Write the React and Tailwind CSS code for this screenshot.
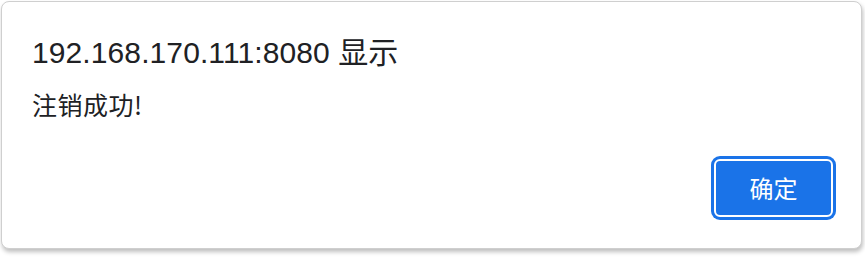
export default function App() {
  return (
    <div className="w-[865px] h-[257px] bg-white pl-[1px] pt-[1px]" style={{ fontFamily: '"Liberation Sans", "Noto Sans CJK SC", sans-serif' }}>
      <div className="w-[861px] h-[248px] rounded-[8px] border border-[#cfcfcf] bg-white shadow-[1px_3px_4px_rgba(0,0,0,0.25)] flex flex-col pl-[30px] pr-[28px] pt-[33px] pb-[31px]">
        <div className="text-[30px] leading-[36px] text-[#202124] tracking-[0.1px]">192.168.170.111:8080 显示</div>
        <div className="mt-[17px] text-[25px] leading-[32px] text-[#202124] tracking-[0.5px]" style={{ fontFamily: '"Noto Sans CJK SC", sans-serif' }}>注销成功!</div>
        <div className="mt-auto flex justify-end">
          <button className="w-[119px] h-[58px] rounded-[6px] bg-[#1a73e8] border-2 border-white ring-[3px] ring-[#1a73e8] text-white text-[24px] leading-none flex items-center justify-center" style={{ fontFamily: '"Noto Sans CJK SC", sans-serif' }}>
            确定
          </button>
        </div>
      </div>
    </div>
  );
}
